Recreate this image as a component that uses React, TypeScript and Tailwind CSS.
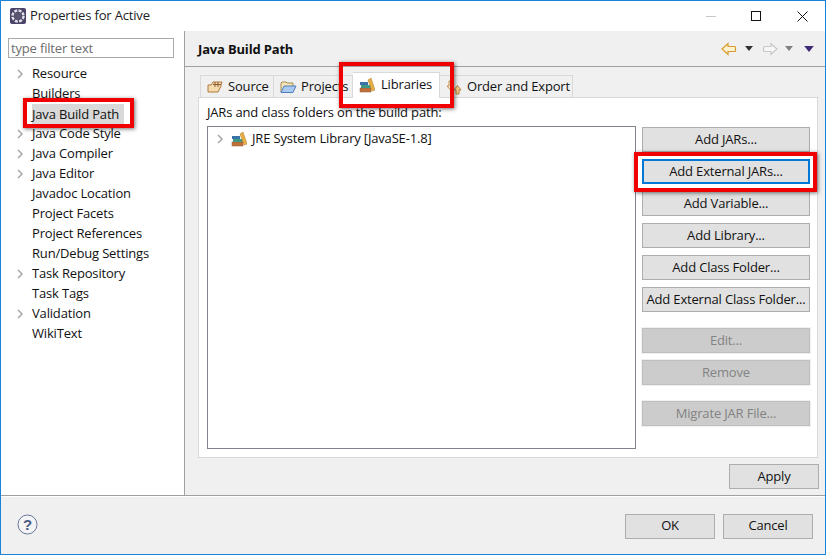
import React from "react";

const Chevron = ({ show }: { show: boolean }) => (
  <span className="w-[10px] h-[20px] flex items-center justify-center shrink-0">
    {show && (
      <svg width="8" height="10" viewBox="0 0 8 10" fill="none">
        <path d="M2 1l4 4-4 4" stroke="#a6a6a6" strokeWidth="1.500" />
      </svg>
    )}
  </span>
);

const tree: [string, boolean][] = [
  ["Resource", true],
  ["Builders", false],
  ["Java Build Path", false],
  ["Java Code Style", true],
  ["Java Compiler", true],
  ["Java Editor", true],
  ["Javadoc Location", false],
  ["Project Facets", false],
  ["Project References", false],
  ["Run/Debug Settings", false],
  ["Task Repository", true],
  ["Task Tags", false],
  ["Validation", true],
  ["WikiText", false],
];

const Books = () => (
  <svg width="16" height="16" viewBox="0 0 16 16" className="shrink-0">
    <rect x="1" y="11" width="11" height="4" fill="#c0703a" stroke="#8f5a30" strokeWidth=".5" />
    <rect x="2" y="8" width="10" height="3" fill="#3e9a84" />
    <rect x="1" y="5" width="8" height="3" fill="#3b72a8" />
    <path d="M9 3l3-2 4 12-3 1z" fill="#e8b040" stroke="#b8843a" strokeWidth=".6" />
  </svg>
);

const Btn = ({ label, focus, disabled, className = "" }: { label: string; focus?: boolean; disabled?: boolean; className?: string }) => (
  <div
    className={`h-[25px] flex items-center justify-center text-[13px] border ${
      focus
        ? "border-2 border-[#0078d7] bg-[#e1e1e1] text-[#111]"
        : disabled
          ? "border-[#bfbfbf] bg-[#cccccc] text-[#838383] outline outline-1 outline-[#f0f0f0]"
          : "border-[#adadad] bg-[#e1e1e1] text-[#111]"
    } ${className}`}
  >
    {label}
  </div>
);

const Tab = ({ label, icon, w, gap, active }: { label: string; icon: React.ReactNode; w: string; gap: string; active?: boolean }) => (
  <div
    className={`${w} ${gap} flex items-center pl-[6px] border-t border-r border-[#d9d9d9] text-[13px] text-[#111] whitespace-nowrap ${
      active ? "h-[26px] bg-white relative z-10 -mb-px pb-[1px]" : "h-[22px] bg-[#f0f0f0] pt-[1px]"
    }`}
  >
    {icon}
    {label}
  </div>
);

const Arrow = ({ color, stroke, flip }: { color: string; stroke: string; flip?: boolean }) => (
  <svg width="16" height="14" viewBox="0 0 16 14" className={flip ? "-scale-x-100" : ""}>
    <path d="M1 7l6-5.500V4.500h6.500a1 1 0 0 1 1 1v3a1 1 0 0 1-1 1H7v3z" fill={color} stroke={stroke} strokeWidth="1.200" />
  </svg>
);

const Tri = ({ c, w = 8, h = 5 }: { c: string; w?: number; h?: number }) => (
  <svg width={w} height={h} viewBox="0 0 8 5" className="block">
    <path d="M0 0h8L4 5z" fill={c} />
  </svg>
);

export default function App() {
  return (
    <div
      className="relative w-[826px] h-[555px] overflow-hidden bg-[#f0f0f0] border border-[#1883d7] flex flex-col text-[#111] tracking-[-0.17px]"
      style={{ fontFamily: '"Open Sans", "Noto Sans", sans-serif' }}
    >
      <div className="h-[30px] bg-white flex items-center shrink-0">
        <svg width="18" height="18" viewBox="0 0 18 18" className="ml-[8px]">
          <rect x="1" y="1" width="16" height="16" rx="2" fill="#4a4468" />
          <circle cx="9" cy="9" r="5.500" fill="none" stroke="#e0e0e8" strokeWidth="2.500" strokeDasharray="3 1.300" />
          <circle cx="9" cy="9" r="3.500" fill="#5a5870" />
        </svg>
        <span className="ml-[3px] text-[13px] text-[#222]">Properties for Active</span>
        <div className="ml-auto flex items-center text-[#111]">
          <div className="w-[10px] h-px bg-[#c8c8c8] mr-[35px]" />
          <div className="w-[10px] h-[10px] border border-[#111] mr-[36px]" />
          <svg width="11" height="11" viewBox="0 0 11 11" className="mr-[17px]">
            <path d="M.5.500l10 10M10.500.500l-10 10" stroke="#111" />
          </svg>
        </div>
      </div>

      <div className="flex flex-1 min-h-0">
        <div className="w-[184px] shrink-0 bg-white border-r border-[#a0a0a0] pt-[7px] pl-[7px]">
          <div className="w-[166px] h-[20px] border border-[#a9a9a9] flex items-center pl-[2px] pt-[1px] text-[13px] text-[#6d6d6d]">
            type filter text
          </div>
          <div className="mt-[6px]">
            {tree.map(([t, c]) => (
              <div key={t} className="h-[20px] flex items-center pl-[7px] text-[13px] text-[#111] whitespace-nowrap">
                <Chevron show={c} />
                <span className={`ml-[7px] ${t === "Java Build Path" ? "bg-[#d9d9d9] w-[92px] h-[20px] leading-[20px]" : ""}`}>{t}</span>
              </div>
            ))}
          </div>
        </div>

        <div className="flex-1 flex flex-col min-w-0">
          <div className="h-[36px] border-b border-[#a0a0a0] flex items-center pl-[13px] pr-[11px] shrink-0">
            <span className="text-[13px] font-bold text-[#111] mt-[2px]">Java Build Path</span>
            <div className="ml-auto flex items-center">
              <Arrow color="#fdf3cf" stroke="#d99a2b" />
              <span className="ml-[8px]"><Tri c="#333" /></span>
              <span className="ml-[9px]"><Arrow color="#f6f6f6" stroke="#c8c8c8" flip /></span>
              <span className="ml-[7px]"><Tri c="#808080" /></span>
              <span className="ml-[11px]"><Tri c="#3f2a78" w={10} h={6} /></span>
            </div>
          </div>

          <div className="flex-1 flex flex-col pl-[13px] pr-[6px] pt-[8px]">
            <div className="flex items-end h-[23px] pl-[2px] shrink-0 border-b border-[#d9d9d9]">
              <Tab
                w="w-[74px] border-l"
                gap="gap-[4px]"
                label="Source"
                icon={
                  <svg width="17" height="14" viewBox="0 0 17 14" className="shrink-0">
                    <path d="M1 12V5h3l2-3h9l-1 3v1l-3 6z" fill="#f5dcae" stroke="#b07a3e" />
                    <path d="M8 2v5M11 2v5M6 4.500h8" stroke="#8a5a2e" />
                  </svg>
                }
              />
              <Tab
                w="w-[79px]"
                gap="gap-[4px]"
                label="Projects"
                icon={
                  <svg width="17" height="14" viewBox="0 0 17 14" className="shrink-0">
                    <path d="M1 12V3l1-1h4l1 1h6v3" fill="#f7e6b4" stroke="#a08a55" />
                    <path d="M1 12.500L4 6h12l-3 6.500z" fill="#a9c9f0" stroke="#4f7db8" />
                  </svg>
                }
              />
              <Tab w="w-[87px]" gap="gap-[6px]" active label="Libraries" icon={<Books />} />
              <Tab
                w="w-[133px]"
                gap="gap-[5px]"
                label="Order and Export"
                icon={
                  <svg width="16" height="15" viewBox="0 0 16 15" className="shrink-0">
                    <path d="M1 6h2V1h3v5h2l-3.500 4z" fill="#f8e8c4" stroke="#c09050" />
                    <path d="M8 10h2v4h3v-4h2l-3.500-4.500z" fill="#f6d08a" stroke="#b5813c" />
                  </svg>
                }
              />
            </div>

            <div className="h-[360px] w-[620px] bg-white border border-t-0 border-[#d9d9d9] pl-[8px] pr-[7px] shrink-0">
              <div className="h-[28px] flex items-center pt-[2px] text-[13px] text-[#111]">JARs and class folders on the build path:</div>
              <div className="flex gap-[6px]">
                <div className="w-[429px] h-[323px] border border-[#82828c] pt-[1px] pl-[7px]">
                  <div className="flex items-center h-[20px] pt-[1px] text-[13px] text-[#111]">
                    <Chevron show />
                    <span className="ml-[6px]"><Books /></span>
                    <span className="ml-[5px]">JRE System Library [JavaSE-1.8]</span>
                  </div>
                </div>
                <div className="w-[168px] flex flex-col pt-[1px]">
                  <Btn label="Add JARs..." />
                  <Btn label="Add External JARs..." focus className="mt-[7px]" />
                  <Btn label="Add Variable..." className="mt-[7px]" />
                  <Btn label="Add Library..." className="mt-[7px]" />
                  <Btn label="Add Class Folder..." className="mt-[7px]" />
                  <Btn label="Add External Class Folder..." className="mt-[7px]" />
                  <Btn label="Edit..." disabled className="mt-[16px]" />
                  <Btn label="Remove" disabled className="mt-[7px]" />
                  <Btn label="Migrate JAR File..." disabled className="mt-[16px]" />
                </div>
              </div>
            </div>

            <div className="flex justify-end mt-[6px]">
              <Btn label="Apply" className="w-[90px]" />
            </div>
          </div>
        </div>
      </div>

      <div className="h-[59px] shrink-0 border-t border-[#a0a0a0] shadow-[inset_0_1px_0_#fff] flex items-center pl-[16px] pr-[12px]">
        <svg width="21" height="21" viewBox="0 0 21 21" className="-mt-[2px]">
          <circle cx="10.500" cy="10.500" r="9.500" fill="#f4f4f6" stroke="#6a7a98" />
          <text x="10.500" y="16" textAnchor="middle" fontSize="15" fontWeight="700" fill="#4a5a85" fontFamily="Liberation Sans">?</text>
        </svg>
        <div className="ml-auto flex gap-[8px] mt-[2px]">
          <Btn label="OK" className="w-[90px]" />
          <Btn label="Cancel" className="w-[90px]" />
        </div>
      </div>

      {/* red annotation boxes */}
      <div className="absolute left-[22px] top-[97px] w-[111px] h-[30px] border-[4px] border-[#f00000] shadow-[1px_1px_4px_rgba(0,0,0,0.55)]" />
      <div className="absolute left-[338px] top-[61px] w-[115px] h-[46px] border-[4px] border-[#f00000] shadow-[1px_1px_4px_rgba(0,0,0,0.55)]" />
      <div className="absolute left-[633px] top-[151px] w-[183px] h-[40px] border-[4px] border-[#f00000] shadow-[1px_1px_4px_rgba(0,0,0,0.55)]" />
    </div>
  );
}
